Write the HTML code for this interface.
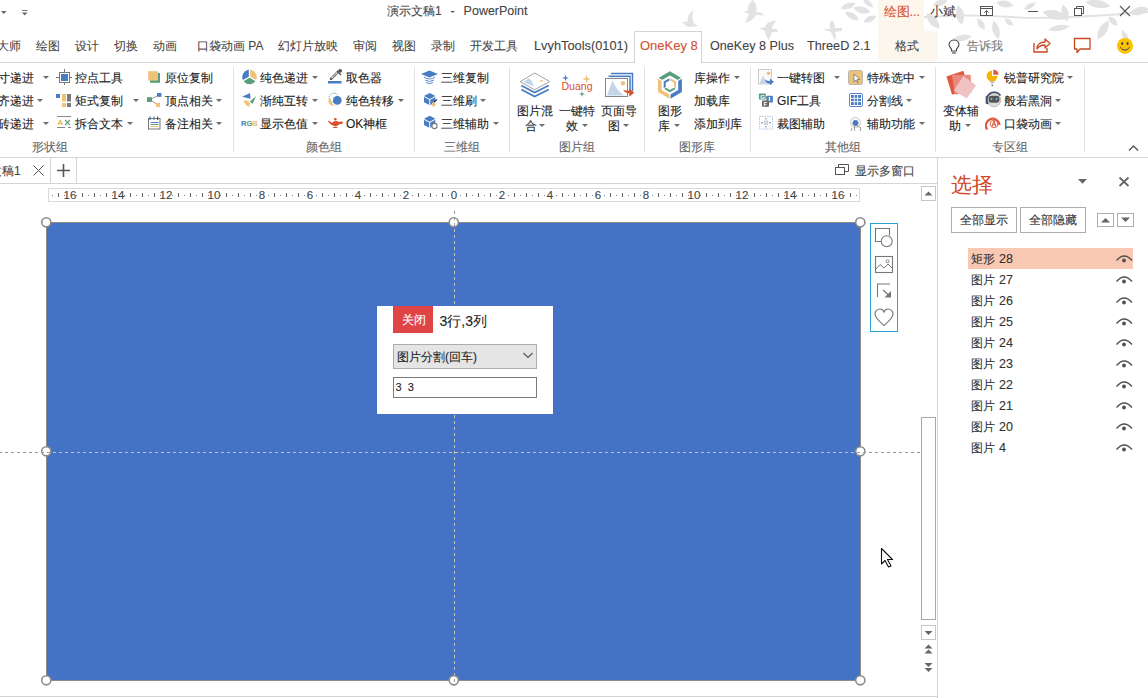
<!DOCTYPE html><html><head><meta charset="utf-8"><style>
html,body{margin:0;padding:0;width:1148px;height:698px;overflow:hidden;background:#fff;font-family:"Liberation Sans",sans-serif;}
.t{position:absolute;white-space:nowrap;-webkit-text-stroke:0.1px currentColor;}
.arr{position:absolute;width:0;height:0;border-left:3px solid transparent;border-right:3px solid transparent;border-top:3px solid #777;}
</style></head><body>
<svg style="position:absolute;left:0px;top:0px;" width="1148" height="62" viewBox="0 0 1148 62"><path fill="#e2e2e2" d="M693.5,10 C689,13 687,17 688,21 L682,22.5 L688,27 L698,26 L694,23.5 C692,20 692,15 693.5,10 Z"/><path fill="#e2e2e2" d="M752.6,0 C749,3 747,8 748,11 L743,11 L749,14 C748,17 746,20 745,22.5 C750,22 754,19 756,15 L764,15.5 L762,13 L756,12 C758,8 756,3 752.6,0 Z"/><path fill="#e2e2e2" d="M776,20.5 C770,21 766,23 765,27 L759,28.5 L765,31 C765,35 767,38 769,40 C770,37 771,34 772,32 L777.5,32 L777.5,29 L772,29 C772,26 774,23 776,20.5 Z"/><path fill="#e2e2e2" d="M832,20 C829,23 829,26 831,29 L823,29 L831,32 C832,35 833,38 836,40 C836,37 836,35 835,32 L842,31 L842,28 L835,28 C835,25 834,22 832,20 Z"/><path transform="translate(848,6) rotate(-20)" fill="#e2e2e2" d="M-8.0,0 Q0,-6 8.0,0 Q0,6 -8.0,0 Z"/><path transform="translate(862,10) rotate(15)" fill="#e2e2e2" d="M-9.0,0 Q0,-7 9.0,0 Q0,7 -9.0,0 Z"/><path transform="translate(852,16) rotate(30)" fill="#e2e2e2" d="M-8.0,0 Q0,-6 8.0,0 Q0,6 -8.0,0 Z"/><path transform="translate(870,19) rotate(-25)" fill="#e2e2e2" d="M-7.0,0 Q0,-6 7.0,0 Q0,6 -7.0,0 Z"/><path transform="translate(868,3) rotate(40)" fill="#e2e2e2" d="M-7.0,0 Q0,-5 7.0,0 Q0,5 -7.0,0 Z"/><path d="M924,17 Q970,14 1011,17 T1148,12" stroke="#e2e2e2" stroke-width="1.8" fill="none"/><path transform="translate(933,21) rotate(50)" fill="#e2e2e2" d="M-10.0,0 Q0,-8 10.0,0 Q0,8 -10.0,0 Z"/><path transform="translate(960,15) rotate(80)" fill="#e2e2e2" d="M-10.0,0 Q0,-8 10.0,0 Q0,8 -10.0,0 Z"/><path transform="translate(1005,4) rotate(10)" fill="#e2e2e2" d="M-9.0,0 Q0,-7 9.0,0 Q0,7 -9.0,0 Z"/><path transform="translate(981,24) rotate(60)" fill="#e2e2e2" d="M-7.0,0 Q0,-6 7.0,0 Q0,6 -7.0,0 Z"/><path transform="translate(996,30) rotate(75)" fill="#e2e2e2" d="M-10.0,0 Q0,-7 10.0,0 Q0,7 -10.0,0 Z"/><path transform="translate(1009,22) rotate(40)" fill="#e2e2e2" d="M-5.5,0 Q0,-5 5.5,0 Q0,5 -5.5,0 Z"/><path transform="translate(1055,15) rotate(15)" fill="#e2e2e2" d="M-13.0,0 Q0,-9 13.0,0 Q0,9 -13.0,0 Z"/><path transform="translate(1065,13) rotate(75)" fill="#e2e2e2" d="M-9.0,0 Q0,-7 9.0,0 Q0,7 -9.0,0 Z"/><path transform="translate(1059,28) rotate(-10)" fill="#e2e2e2" d="M-11.0,0 Q0,-6 11.0,0 Q0,6 -11.0,0 Z"/><path transform="translate(1098,4) rotate(10)" fill="#e2e2e2" d="M-13.0,0 Q0,-8 13.0,0 Q0,8 -13.0,0 Z"/><path transform="translate(1103,30) rotate(-60)" fill="#e2e2e2" d="M-11.0,0 Q0,-8 11.0,0 Q0,8 -11.0,0 Z"/><path transform="translate(1113,21) rotate(45)" fill="#e2e2e2" d="M-6.5,0 Q0,-6 6.5,0 Q0,6 -6.5,0 Z"/><path transform="translate(1139,11) rotate(-15)" fill="#e2e2e2" d="M-10.0,0 Q0,-8 10.0,0 Q0,8 -10.0,0 Z"/><path transform="translate(962,38) rotate(-10)" fill="#e2e2e2" d="M-10.0,0 Q0,-6 10.0,0 Q0,6 -10.0,0 Z"/><path transform="translate(940,3) rotate(-20)" fill="#e2e2e2" d="M-8.0,0 Q0,-6 8.0,0 Q0,6 -8.0,0 Z"/><path transform="translate(1030,6) rotate(-30)" fill="#e2e2e2" d="M-7.0,0 Q0,-5 7.0,0 Q0,5 -7.0,0 Z"/><path transform="translate(1125,36) rotate(60)" fill="#e2e2e2" d="M-7.0,0 Q0,-5 7.0,0 Q0,5 -7.0,0 Z"/></svg>
<div style="position:absolute;left:878px;top:0px;width:46px;height:31px;background:#fdf6ec"></div>
<div style="position:absolute;left:878px;top:31px;width:60px;height:30px;background:#fdf6ec"></div>
<svg style="position:absolute;left:0px;top:0px;" width="40" height="20" viewBox="0 0 40 20"><path d="M1,11 H6.5 L3.75,14 Z" fill="#666"/><path d="M22,10.5 H27.5" stroke="#777" stroke-width="1"/><path d="M22,12.5 H27.5 L24.75,15.5 Z" fill="#666"/></svg>
<div class="t" style="left:387px;top:0.5px;font-size:12px;line-height:20px;color:#444;">演示文稿1</div>
<div class="t" style="left:450.5px;top:0.5px;font-size:12.5px;line-height:20px;color:#444;">-</div>
<div class="t" style="left:463.6px;top:0.5px;font-size:12.5px;line-height:20px;color:#444;">PowerPoint</div>
<div class="t" style="left:883.5px;top:1.5px;font-size:12.5px;line-height:20px;color:#d35230;">绘图...</div>
<div class="t" style="left:930px;top:1.5px;font-size:12.5px;line-height:20px;color:#444;">小斌</div>
<svg style="position:absolute;left:0px;top:0px;" width="1148" height="24" viewBox="0 0 1148 24"><rect x="980.5" y="6.5" width="12" height="9" fill="none" stroke="#555" stroke-width="1"/><path d="M980.5,8.5 H992.5" stroke="#555" stroke-width="1"/><path d="M986.5,15 V10.5 M984.3,12.7 L986.5,10.5 L988.7,12.7" fill="none" stroke="#555" stroke-width="1"/></svg>
<div style="position:absolute;left:1028px;top:11px;width:10px;height:1px;background:#555"></div>
<svg style="position:absolute;left:1073px;top:5px;" width="12" height="12" viewBox="0 0 12 12"><rect x="1.5" y="3.5" width="7" height="7" fill="none" stroke="#555"/><path d="M3.5,3.5 V1.5 H10.5 V8.5 H8.5" fill="none" stroke="#555"/></svg>
<svg style="position:absolute;left:1119px;top:5px;" width="12" height="12" viewBox="0 0 12 12"><path d="M1,1 L11,11 M11,1 L1,11" stroke="#555" stroke-width="1.1"/></svg>
<div class="t" style="left:-3px;top:35.5px;font-size:12px;line-height:20px;color:#444;-webkit-text-stroke:0.08px currentColor">大师</div>
<div class="t" style="left:36px;top:35.5px;font-size:12px;line-height:20px;color:#444;-webkit-text-stroke:0.08px currentColor">绘图</div>
<div class="t" style="left:75px;top:35.5px;font-size:12px;line-height:20px;color:#444;-webkit-text-stroke:0.08px currentColor">设计</div>
<div class="t" style="left:114px;top:35.5px;font-size:12px;line-height:20px;color:#444;-webkit-text-stroke:0.08px currentColor">切换</div>
<div class="t" style="left:153px;top:35.5px;font-size:12px;line-height:20px;color:#444;-webkit-text-stroke:0.08px currentColor">动画</div>
<div class="t" style="left:197px;top:35.5px;font-size:12px;line-height:20px;color:#444;-webkit-text-stroke:0.08px currentColor">口袋动画 PA</div>
<div class="t" style="left:278px;top:35.5px;font-size:12px;line-height:20px;color:#444;-webkit-text-stroke:0.08px currentColor">幻灯片放映</div>
<div class="t" style="left:353px;top:35.5px;font-size:12px;line-height:20px;color:#444;-webkit-text-stroke:0.08px currentColor">审阅</div>
<div class="t" style="left:392px;top:35.5px;font-size:12px;line-height:20px;color:#444;-webkit-text-stroke:0.08px currentColor">视图</div>
<div class="t" style="left:431px;top:35.5px;font-size:12px;line-height:20px;color:#444;-webkit-text-stroke:0.08px currentColor">录制</div>
<div class="t" style="left:470px;top:35.5px;font-size:12px;line-height:20px;color:#444;-webkit-text-stroke:0.08px currentColor">开发工具</div>
<div style="position:absolute;left:634px;top:31px;width:66px;height:31px;border:1px solid #d4d4d4;border-bottom:none;background:#fff"></div>
<div class="t" style="left:534px;top:36.0px;font-size:12.8px;line-height:20px;color:#444;">LvyhTools(0101)</div>
<div class="t" style="left:640px;top:36.0px;font-size:13px;line-height:20px;color:#d35230;">OneKey 8</div>
<div class="t" style="left:710px;top:36.0px;font-size:12.6px;line-height:20px;color:#444;">OneKey 8 Plus</div>
<div class="t" style="left:807px;top:36.0px;font-size:12.7px;line-height:20px;color:#444;">ThreeD 2.1</div>
<div class="t" style="left:895px;top:35.5px;font-size:12px;line-height:20px;color:#444;">格式</div>
<svg style="position:absolute;left:946px;top:38px;" width="16" height="17" viewBox="0 0 16 17"><path d="M8,2 C4.5,2 3,4.5 3,6.5 C3,8.5 4.5,9.5 5.5,11 V13 H10.5 V11 C11.5,9.5 13,8.5 13,6.5 C13,4.5 11.5,2 8,2 Z" fill="none" stroke="#444" stroke-width="1.1"/><path d="M6,15 H10" stroke="#444" stroke-width="1.1"/></svg>
<div class="t" style="left:967px;top:35.5px;font-size:12px;line-height:20px;color:#777;">告诉我</div>
<svg style="position:absolute;left:1032px;top:37px;" width="20" height="17" viewBox="0 0 20 17"><path d="M2,6 V15 H15 V11" fill="none" stroke="#c8481f" stroke-width="1.3"/><path d="M5,12 C5,7 9,5 13,5 V2 L18,6.5 L13,11 V8 C10,8 7,9 5,12 Z" fill="none" stroke="#c8481f" stroke-width="1.3" stroke-linejoin="round"/></svg>
<svg style="position:absolute;left:1073px;top:37px;" width="19" height="17" viewBox="0 0 19 17"><path d="M1.5,1.5 H17 V12 H7 L4,15.5 V12 H1.5 Z" fill="none" stroke="#c8481f" stroke-width="1.3" stroke-linejoin="round"/></svg>
<svg style="position:absolute;left:1116px;top:37px;" width="18" height="18" viewBox="0 0 18 18"><circle cx="9" cy="8.9" r="8" fill="#fcc400"/><ellipse cx="6.2" cy="6.5" rx="1" ry="1.5" fill="#3a3a5a"/><ellipse cx="11.6" cy="6.5" rx="1" ry="1.5" fill="#3a3a5a"/><path d="M4.3,10.2 Q9,16.2 13.6,10.2" fill="none" stroke="#3a3a5a" stroke-width="1"/></svg>
<div style="position:absolute;left:0px;top:62px;width:635px;height:1px;background:#d4d4d4"></div>
<div style="position:absolute;left:701px;top:62px;width:447px;height:1px;background:#d4d4d4"></div>
<div style="position:absolute;left:233px;top:67px;width:1px;height:85px;background:#e1e1e1"></div>
<div style="position:absolute;left:414px;top:67px;width:1px;height:85px;background:#e1e1e1"></div>
<div style="position:absolute;left:509px;top:67px;width:1px;height:85px;background:#e1e1e1"></div>
<div style="position:absolute;left:644px;top:67px;width:1px;height:85px;background:#e1e1e1"></div>
<div style="position:absolute;left:750px;top:67px;width:1px;height:85px;background:#e1e1e1"></div>
<div style="position:absolute;left:935px;top:67px;width:1px;height:85px;background:#e1e1e1"></div>
<div style="position:absolute;left:1084px;top:67px;width:1px;height:85px;background:#e1e1e1"></div>
<div class="t" style="left:32px;top:137.0px;font-size:12px;line-height:20px;color:#666;">形状组</div>
<div class="t" style="left:306px;top:137.0px;font-size:12px;line-height:20px;color:#666;">颜色组</div>
<div class="t" style="left:444px;top:137.0px;font-size:12px;line-height:20px;color:#666;">三维组</div>
<div class="t" style="left:559px;top:137.0px;font-size:12px;line-height:20px;color:#666;">图片组</div>
<div class="t" style="left:679px;top:137.0px;font-size:12px;line-height:20px;color:#666;">图形库</div>
<div class="t" style="left:825px;top:137.0px;font-size:12px;line-height:20px;color:#666;">其他组</div>
<div class="t" style="left:992px;top:137.0px;font-size:12px;line-height:20px;color:#666;">专区组</div>
<svg style="position:absolute;left:1128px;top:144px;" width="11" height="8" viewBox="0 0 11 8"><path d="M1,6.5 L5.5,2 L10,6.5" fill="none" stroke="#555" stroke-width="1.4"/></svg>
<div class="t" style="left:-2.5px;top:68.0px;font-size:12px;line-height:20px;color:#222;">寸递进</div>
<div class="arr" style="left:42.6px;top:76.0px;border-top-color:#6d6d6d"></div>
<div class="t" style="left:-2.5px;top:91.0px;font-size:12px;line-height:20px;color:#222;">齐递进</div>
<div class="arr" style="left:36.7px;top:99.0px;border-top-color:#6d6d6d"></div>
<div class="t" style="left:-2.5px;top:113.5px;font-size:12px;line-height:20px;color:#222;">砖递进</div>
<div class="arr" style="left:42.6px;top:121.5px;border-top-color:#6d6d6d"></div>
<svg style="position:absolute;left:55px;top:69px;" width="17" height="17" viewBox="0 0 17 17"><path d="M9.5,0 V16 M1,8.5 H17" stroke="#777" stroke-width="1"/><rect x="4.5" y="3.5" width="10" height="10" fill="#fff" stroke="#777" stroke-width="1"/><rect x="6" y="5" width="7" height="7" fill="#4a7cc4"/></svg>
<div class="t" style="left:75px;top:68.0px;font-size:12px;line-height:20px;color:#222;">控点工具</div>
<svg style="position:absolute;left:55px;top:92px;" width="17" height="17" viewBox="0 0 17 17"><rect x="1" y="2" width="4" height="4" fill="#4a7cc4"/><rect x="7" y="2" width="4" height="7.5" fill="#efc27a"/><rect x="12" y="2" width="4" height="7.5" fill="#7a7a7a"/><rect x="7" y="11" width="4" height="4" fill="#efc27a"/><rect x="12" y="11" width="4" height="4" fill="#7a7a7a"/></svg>
<div class="t" style="left:75px;top:91.0px;font-size:12px;line-height:20px;color:#222;">矩式复制</div>
<div class="arr" style="left:132.5px;top:99.0px;border-top-color:#6d6d6d"></div>
<svg style="position:absolute;left:55px;top:115px;" width="17" height="17" viewBox="0 0 17 17"><path d="M2,1.5 H16" stroke="#888" stroke-width="1"/><path d="M2,12.5 H10 M13,12.5 H16" stroke="#888" stroke-width="1"/><text x="2.5" y="10.2" font-size="8" font-family="Liberation Sans" fill="#f0b44c" font-weight="bold">A</text><path d="M10,5 L15,10 M15,5 L10,10" stroke="#5a9e80" stroke-width="1.1"/></svg>
<div class="t" style="left:75px;top:113.5px;font-size:12px;line-height:20px;color:#222;">拆合文本</div>
<div class="arr" style="left:126.69999999999999px;top:121.5px;border-top-color:#6d6d6d"></div>
<svg style="position:absolute;left:147px;top:70px;" width="15" height="15" viewBox="0 0 15 15"><rect x="3" y="3" width="10" height="9.8" fill="#5a9e80"/><rect x="1.2" y="1.2" width="9.8" height="9.4" fill="#efc27a"/></svg>
<div class="t" style="left:165px;top:68.0px;font-size:12px;line-height:20px;color:#222;">原位复制</div>
<svg style="position:absolute;left:146px;top:92px;" width="16" height="16" viewBox="0 0 16 16"><path d="M4,7.5 L13,3 M4,7.5 L12,13" stroke="#999" stroke-width="1"/><rect x="1" y="5.2" width="5" height="4.8" fill="#5a9e80"/><rect x="11" y="1" width="4.4" height="3.8" fill="#4a7cc4"/><rect x="10" y="11" width="4" height="4" fill="#efc27a"/></svg>
<div class="t" style="left:165px;top:91.0px;font-size:12px;line-height:20px;color:#222;">顶点相关</div>
<div class="arr" style="left:216px;top:99.0px;border-top-color:#6d6d6d"></div>
<svg style="position:absolute;left:147px;top:114px;" width="15" height="17" viewBox="0 0 15 17"><rect x="1.5" y="4.5" width="11.5" height="10.5" fill="#fff" stroke="#666" stroke-width="0.9"/><path d="M3,2.5 V6 M7,2.5 V6 M10.6,2.5 V6" stroke-width="1.4"/><path d="M3,2.5 V6" stroke="#4a7cc4" stroke-width="1.4"/><path d="M7,2.5 V6" stroke="#5a9e80" stroke-width="1.4"/><path d="M10.6,2.5 V6" stroke="#555" stroke-width="1.2"/><path d="M3.5,8.5 H11.5" stroke="#4a7cc4" stroke-width="1"/><path d="M3.5,10.5 H11.5" stroke="#5a9e80" stroke-width="1"/><path d="M3.5,12.5 H11.5" stroke="#efc27a" stroke-width="1"/></svg>
<div class="t" style="left:165px;top:113.5px;font-size:12px;line-height:20px;color:#222;">备注相关</div>
<div class="arr" style="left:216px;top:121.5px;border-top-color:#6d6d6d"></div>
<svg style="position:absolute;left:0px;top:0px;" width="360" height="140" viewBox="0 0 360 140"><path d="M249.5,77 L243.26,80.60 A7.2,7.2 0 0 1 249.50,69.80 Z" fill="#4a7cc4"/><path d="M249.5,77 L249.50,69.80 A7.2,7.2 0 0 1 255.74,80.60 Z" fill="#efc27a"/><path d="M249.5,77 L255.74,80.60 A7.2,7.2 0 0 1 243.26,80.60 Z" fill="#5a9e80"/><path d="M249.5,77 L249.50,69.80 M249.5,77 L255.74,80.60 M249.5,77 L243.26,80.60" stroke="#fff" stroke-width="1.3"/></svg>
<div class="t" style="left:260px;top:68.0px;font-size:12px;line-height:20px;color:#222;">纯色递进</div>
<div class="arr" style="left:311.6px;top:76.0px;border-top-color:#6d6d6d"></div>
<svg style="position:absolute;left:0px;top:0px;" width="360" height="140" viewBox="0 0 360 140"><path d="M242,96.8 L250,93 L250.5,98.8 Z" fill="#4a7cc4"/><path d="M256.2,96 L252.5,104 L249.8,101.5 Z" fill="#5a9e80"/><path d="M243.5,100.8 Q247.5,99.8 249.8,102.5 L249.5,107 Q245,105.5 243.5,100.8 Z" fill="#efc27a"/></svg>
<div class="t" style="left:260px;top:91.0px;font-size:12px;line-height:20px;color:#222;">渐纯互转</div>
<div class="arr" style="left:311.6px;top:99.0px;border-top-color:#6d6d6d"></div>
<div class="t" style="left:241px;top:113.5px;font-size:7.5px;line-height:20px;color:#222;"><b style="color:#4a7cc4">R</b><b style="color:#5a9e80">G</b><b style="color:#efc27a">B</b></div>
<div class="t" style="left:260px;top:113.5px;font-size:12px;line-height:20px;color:#222;">显示色值</div>
<div class="arr" style="left:311.6px;top:121.5px;border-top-color:#6d6d6d"></div>
<svg style="position:absolute;left:0px;top:0px;" width="360" height="140" viewBox="0 0 360 140"><rect x="328" y="81" width="13.5" height="2.5" fill="#4a7cc4"/><path d="M331,78.8 L338,71.8" stroke="#555" stroke-width="2.6" stroke-linecap="round"/><path d="M331.6,78.2 L337.4,72.4" stroke="#fff" stroke-width="1.1"/><path d="M333,76.8 L335.5,74.3" stroke="#6a9ad6" stroke-width="0.9"/><path d="M337,71 L341,75" stroke="#555" stroke-width="1.3"/><circle cx="340.2" cy="70.8" r="1.9" fill="#555"/></svg>
<div class="t" style="left:346px;top:68.0px;font-size:12px;line-height:20px;color:#222;">取色器</div>
<svg style="position:absolute;left:0px;top:0px;" width="360" height="140" viewBox="0 0 360 140"><circle cx="333.7" cy="97.7" r="4.6" fill="none" stroke="#5a9e80" stroke-width="0.8" stroke-dasharray="1.6 0.8"/><path d="M328.2,100 Q328.5,106.5 336,105.8 Q331,104.5 330.8,99 Z" fill="#efc27a"/><circle cx="337.3" cy="100.4" r="4.3" fill="#4a7cc4"/></svg>
<div class="t" style="left:346px;top:91.0px;font-size:12px;line-height:20px;color:#222;">纯色转移</div>
<div class="arr" style="left:398px;top:99.0px;border-top-color:#6d6d6d"></div>
<svg style="position:absolute;left:0px;top:0px;" width="360" height="140" viewBox="0 0 360 140"><path d="M327.5,120.5 C330,121 331,122 332,123 C333,121 337,120 339,122 L341,121.5 C343,121 343.5,123 342,124 L339.5,124 C338.5,125.5 337,126 335.5,126 V127 H337.5 V128 H333 V127 H335 V126 C333,126 331,125 330,123.5 C329,122.5 328,121.5 327.5,120.5 Z" fill="#d9502c"/><circle cx="335.3" cy="119.3" r="1.3" fill="#d9502c"/></svg>
<div class="t" style="left:346px;top:113.5px;font-size:12px;line-height:20px;color:#222;">OK神框</div>
<svg style="position:absolute;left:421px;top:70px;" width="17" height="16" viewBox="0 0 17 16"><path d="M0,4 L8.5,0.5 L17,4 L8.5,7.5 Z" fill="#4a7cc4"/><path d="M3,7 Q8.5,11 14,7 M4,10 Q8.5,13 13,10 M5,12.5 Q8.5,15 12,12.5" fill="none" stroke="#4a7cc4" stroke-width="0.9"/></svg>
<div class="t" style="left:441px;top:68.0px;font-size:12px;line-height:20px;color:#222;">三维复制</div>
<svg style="position:absolute;left:0px;top:0px;" width="460" height="140" viewBox="0 0 460 140"><path d="M424,96 L429.7,93 L435.4,96 L429.7,99 Z" fill="#4a7cc4"/><path d="M424,97 L429.2,99.8 V105 L424,102.2 Z" fill="#4a7cc4"/><path d="M430.2,99.8 L435.4,97 V102.2 L430.2,105 Z" fill="#4a7cc4"/><path d="M431,104.5 L433.5,101.5 L436,104.5 L433.5,107 Z" fill="#efc27a"/><path d="M434,102 L437,99.5" stroke="#333" stroke-width="1.2"/></svg>
<svg style="position:absolute;left:0px;top:0px;" width="460" height="140" viewBox="0 0 460 140"><path d="M424,118.8 L429.7,115.8 L435.4,118.8 L429.7,121.8 Z" fill="#4a7cc4"/><path d="M424,119.8 L429.2,122.6 V127.8 L424,125.0 Z" fill="#4a7cc4"/><path d="M430.2,122.6 L435.4,119.8 V125.0 L430.2,127.8 Z" fill="#4a7cc4"/><circle cx="434.5" cy="126" r="2.6" fill="#fff" stroke="#777" stroke-width="1.1"/></svg>
<div class="t" style="left:441px;top:91.0px;font-size:12px;line-height:20px;color:#222;">三维刷</div>
<div class="arr" style="left:480.4px;top:99.0px;border-top-color:#6d6d6d"></div>
<div class="t" style="left:441px;top:113.5px;font-size:12px;line-height:20px;color:#222;">三维辅助</div>
<div class="arr" style="left:492.5px;top:121.5px;border-top-color:#6d6d6d"></div>
<svg style="position:absolute;left:0px;top:0px;" width="700" height="140" viewBox="0 0 700 140"><path d="M520.2,81.6 L534.6,73 L549.8,81.6 L534.6,89.7 Z" fill="#fff" stroke="#8a8a8a" stroke-width="0.8"/><path d="M523.5,82 L528.5,78.3 L531.5,80.5 L534,86.5 Z" fill="#c4d5ea"/><rect x="540" y="80.2" width="3" height="1.3" fill="#efc27a"/><path d="M521.3,85.5 L534.6,92.5 L548.7,85.5 M521.3,89.5 L534.6,96.5 L548.7,89.5" fill="none" stroke="#4a7cc4" stroke-width="1.7"/></svg>
<div class="t" style="left:517px;top:101.0px;font-size:12px;line-height:20px;color:#222;">图片混</div>
<div class="t" style="left:524.5px;top:116.0px;font-size:12px;line-height:20px;color:#222;">合</div>
<div class="arr" style="left:539px;top:124.0px;border-top-color:#6d6d6d"></div>
<svg style="position:absolute;left:560px;top:73px;" width="34" height="24" viewBox="0 0 34 24"><text x="1.5" y="17" font-size="11.5" textLength="31" lengthAdjust="spacingAndGlyphs" font-family="Liberation Sans" fill="#d9502c">Duang</text><path d="M5.5,1.5 L6.3,4.2 L9,5 L6.3,5.8 L5.5,8.5 L4.7,5.8 L2,5 L4.7,4.2 Z" fill="#4a7cc4"/><path d="M26.5,1 L27.3,5 L31,6 L27.3,7 L26.5,11 L25.7,7 L22,6 L25.7,5 Z" fill="#efc27a"/><path d="M22,18 L22.7,20.3 L25,21 L22.7,21.7 L22,24 L21.3,21.7 L19,21 L21.3,20.3 Z" fill="#5a9e80"/></svg>
<div class="t" style="left:559px;top:101.0px;font-size:12px;line-height:20px;color:#222;">一键特</div>
<div class="t" style="left:565.5px;top:116.0px;font-size:12px;line-height:20px;color:#222;">效</div>
<div class="arr" style="left:581.5px;top:124.0px;border-top-color:#6d6d6d"></div>
<svg style="position:absolute;left:0px;top:0px;" width="700" height="140" viewBox="0 0 700 140"><path d="M611,73.5 H632.5 V91" fill="none" stroke="#4a7cc4" stroke-width="1.5"/><path d="M608.5,76.3 H630 V93" fill="none" stroke="#4a7cc4" stroke-width="1.5"/><rect x="610" y="77.5" width="19.5" height="2" fill="#dbe6f3"/><rect x="605.5" y="78.5" width="22" height="18" fill="#fff" stroke="#888" stroke-width="1"/><path d="M607,95.5 L612.5,80.5 C615,87 619,92 624,95.5 Z" fill="#c4d5ea"/><circle cx="623" cy="83.2" r="2.2" fill="#efc27a"/><path d="M623,89.5 C624.5,92.5 627,93.5 629.3,93.2 V96.8 L634.2,92.8 L629.3,88.6 V90.8 C627,91 625,90.5 623,89.5 Z" fill="#d9502c"/></svg>
<div class="t" style="left:601px;top:101.0px;font-size:12px;line-height:20px;color:#222;">页面导</div>
<div class="t" style="left:607.5px;top:116.0px;font-size:12px;line-height:20px;color:#222;">图</div>
<div class="arr" style="left:623px;top:124.0px;border-top-color:#6d6d6d"></div>
<svg style="position:absolute;left:0px;top:0px;" width="700" height="140" viewBox="0 0 700 140"><path d="M657.95,78.20 L669.90,71.30 L681.85,78.20 L678.21,80.30 L669.90,75.50 L661.59,80.30 Z" fill="#5a9e80"/><path d="M681.85,78.20 L681.85,92.00 L669.90,98.90 L669.90,94.70 L678.21,89.90 L678.21,80.30 Z" fill="#4a7cc4"/><path d="M669.90,98.90 L657.95,92.00 L657.95,78.20 L661.59,80.30 L661.59,89.90 L669.90,94.70 Z" fill="#efc27a"/><path d="M682.46,77.85 L677.69,80.60" stroke="#fff" stroke-width="1.2"/><path d="M669.90,99.60 L669.90,94.10" stroke="#fff" stroke-width="1.2"/><path d="M657.34,77.85 L662.11,80.60" stroke="#fff" stroke-width="1.2"/><path d="M664.70,88.10 L664.70,82.10 L669.90,79.10" fill="none" stroke="#4a7cc4" stroke-width="2" stroke-linejoin="miter"/><path d="M669.90,79.10 L675.10,82.10 L675.10,88.10" fill="none" stroke="#efc27a" stroke-width="2" stroke-linejoin="miter"/><path d="M675.10,88.10 L669.90,91.10 L664.70,88.10" fill="none" stroke="#5a9e80" stroke-width="2" stroke-linejoin="miter"/><path d="M669.90,77.60 L669.90,80.60" stroke="#fff" stroke-width="0.9"/><path d="M676.40,88.85 L673.80,87.35" stroke="#fff" stroke-width="0.9"/><path d="M663.40,88.85 L666.00,87.35" stroke="#fff" stroke-width="0.9"/></svg>
<div class="t" style="left:658px;top:101.0px;font-size:12px;line-height:20px;color:#222;">图形</div>
<div class="t" style="left:658px;top:116.0px;font-size:12px;line-height:20px;color:#222;">库</div>
<div class="arr" style="left:674px;top:124.0px;border-top-color:#6d6d6d"></div>
<div class="t" style="left:694px;top:68.0px;font-size:12px;line-height:20px;color:#222;">库操作</div>
<div class="arr" style="left:733.5px;top:76.0px;border-top-color:#6d6d6d"></div>
<div class="t" style="left:694px;top:91.0px;font-size:12px;line-height:20px;color:#222;">加载库</div>
<div class="t" style="left:694px;top:113.5px;font-size:12px;line-height:20px;color:#222;">添加到库</div>
<svg style="position:absolute;left:0px;top:0px;" width="800" height="140" viewBox="0 0 800 140"><rect x="758.5" y="69.5" width="13" height="14.5" fill="#fafafa" stroke="#c8c8c8" stroke-width="0.9"/><path d="M759.5,83.5 L763,75.5 L767,83.5 Z" fill="#c4d5ea"/><circle cx="768.6" cy="73.2" r="1.8" fill="#efc27a"/><path d="M765,79.5 Q766,84 770,83.4 V85.3 L773.8,81.8 L770,78.6 V80.7 Q767.5,81.5 765,79.5 Z" fill="#4a7cc4"/></svg>
<div class="t" style="left:777px;top:68.0px;font-size:12px;line-height:20px;color:#222;">一键转图</div>
<div class="arr" style="left:834px;top:76.0px;border-top-color:#6d6d6d"></div>
<svg style="position:absolute;left:758px;top:92px;" width="16" height="16" viewBox="0 0 16 16"><rect x="0.9" y="1.4" width="6.9" height="6.1" rx="0.8" fill="#5a9e80"/><text x="2.2" y="6.8" font-size="6" fill="#fff" font-family="Liberation Sans" font-weight="bold">G</text><rect x="8.3" y="3.8" width="6.6" height="6.6" rx="0.8" fill="#4a7cc4"/><rect x="10.8" y="5" width="1.4" height="4" fill="#fff"/><rect x="4" y="8.5" width="7" height="6.3" rx="1" fill="#666"/><text x="5.4" y="14" font-size="6" fill="#fff" font-family="Liberation Sans" font-weight="bold">F</text></svg>
<div class="t" style="left:777px;top:91.0px;font-size:12px;line-height:20px;color:#222;">GIF工具</div>
<svg style="position:absolute;left:0px;top:0px;" width="800" height="140" viewBox="0 0 800 140"><rect x="759.5" y="116.5" width="13" height="12.5" fill="none" stroke="#9ab7dc" stroke-width="0.8" stroke-dasharray="1.5 1"/><rect x="764.2" y="121" width="3.6" height="3.4" fill="#dbe6f3" stroke="#aaa" stroke-width="0.5"/><circle cx="766" cy="118.8" r="0.8" fill="#888"/><circle cx="766" cy="126.8" r="0.8" fill="#888"/><circle cx="762" cy="122.8" r="0.8" fill="#4a7cc4"/><circle cx="770" cy="122.8" r="0.8" fill="#4a7cc4"/></svg>
<div class="t" style="left:777px;top:113.5px;font-size:12px;line-height:20px;color:#222;">裁图辅助</div>
<svg style="position:absolute;left:848px;top:70px;" width="15" height="15" viewBox="0 0 15 15"><rect x="0.5" y="0.5" width="14" height="14" rx="2" fill="#efc27a" stroke="#aaa" stroke-width="0.8"/><path d="M6,4 L6,12 L8,10 L9.5,13 L10.5,12.5 L9,9.5 L12,9.5 Z" fill="#fff" stroke="#666" stroke-width="0.7"/></svg>
<div class="t" style="left:867px;top:68.0px;font-size:12px;line-height:20px;color:#222;">特殊选中</div>
<div class="arr" style="left:918.6px;top:76.0px;border-top-color:#6d6d6d"></div>
<svg style="position:absolute;left:849px;top:93px;" width="14" height="14" viewBox="0 0 14 14"><rect x="0.5" y="0.5" width="13" height="13" rx="1.5" fill="#fff" stroke="#4a7cc4" stroke-width="0.9"/><rect x="2" y="2" width="10" height="10" fill="#4a7cc4"/><path d="M2,5.3 H12 M2,8.6 H12 M5.3,2 V12 M8.6,2 V12" stroke="#fff" stroke-width="0.9"/></svg>
<div class="t" style="left:867px;top:91.0px;font-size:12px;line-height:20px;color:#222;">分割线</div>
<div class="arr" style="left:906px;top:99.0px;border-top-color:#6d6d6d"></div>
<svg style="position:absolute;left:0px;top:0px;" width="900" height="140" viewBox="0 0 900 140"><circle cx="855.5" cy="122.5" r="4.9" fill="none" stroke="#b5b5b5" stroke-width="0.8"/><circle cx="855.5" cy="123" r="3" fill="#4a7cc4"/><path d="M854.5,124.5 V131 M856.5,126 L860.5,127.5 V131 M852,128 L851,131" stroke="#888" stroke-width="0.8" fill="none"/></svg>
<div class="t" style="left:867px;top:113.5px;font-size:12px;line-height:20px;color:#222;">辅助功能</div>
<div class="arr" style="left:918.6px;top:121.5px;border-top-color:#6d6d6d"></div>
<svg style="position:absolute;left:940px;top:64px;" width="40" height="40" viewBox="0 0 40 40"><path d="M7.2,12.8 L23,7.5 L28,26 L12.5,30 Z" fill="#e05a3f" stroke="#e05a3f" stroke-width="1.2" stroke-linejoin="round"/><path d="M12.6,11.5 L30,11.3 L31,28 L15.5,30 Z" fill="#e88a7e" stroke="#e88a7e" stroke-width="1.2" stroke-linejoin="round"/><path d="M23.5,12.8 L35.2,21.6 L26.6,33.6 L14.5,26.6 Z" fill="#f0c2c2" stroke="#f0c2c2" stroke-width="1.2" stroke-linejoin="round"/></svg>
<div class="t" style="left:942.5px;top:101.0px;font-size:12px;line-height:20px;color:#222;">变体辅</div>
<div class="t" style="left:949px;top:116.0px;font-size:12px;line-height:20px;color:#222;">助</div>
<div class="arr" style="left:965px;top:124.0px;border-top-color:#6d6d6d"></div>
<svg style="position:absolute;left:0px;top:0px;" width="1010" height="140" viewBox="0 0 1010 140"><path d="M988.5,80 H996 L992.2,85 Z" fill="#c8c8c8"/><path d="M991.2,85 H993.2 L992.2,86.5 Z" fill="#555"/><path d="M992,76 V70.6 A5.4,5.4 0 1 0 997.4,76 Z" fill="#f5b400"/><path d="M993.3,74.8 V69.6 A5.3,5.3 0 0 1 998.6,74.8 Z" fill="#e05a3f"/></svg>
<div class="t" style="left:1004px;top:68.0px;font-size:12px;line-height:20px;color:#222;">锐普研究院</div>
<div class="arr" style="left:1067px;top:76.0px;border-top-color:#6d6d6d"></div>
<svg style="position:absolute;left:0px;top:0px;" width="1010" height="140" viewBox="0 0 1010 140"><circle cx="994" cy="100" r="6.8" fill="#dcdcdc" stroke="#c0c0c0" stroke-width="1"/><path d="M988,104 A6.8,6.8 0 0 1 1000.5,95.5" fill="none" stroke="#3c4a6a" stroke-width="1.6"/><path d="M986.2,96 V104" stroke="#3c4a6a" stroke-width="1"/><rect x="988.5" y="95.8" width="11" height="7" rx="3" fill="#555"/><circle cx="991.5" cy="99" r="0.9" fill="#7cc4f0"/><circle cx="996.5" cy="99" r="0.9" fill="#7cc4f0"/></svg>
<div class="t" style="left:1004px;top:91.0px;font-size:12px;line-height:20px;color:#222;">般若黑洞</div>
<div class="arr" style="left:1055px;top:99.0px;border-top-color:#6d6d6d"></div>
<svg style="position:absolute;left:985px;top:115px;" width="16" height="15" viewBox="0 0 16 15"><path d="M2.2,14.5 A6.8,6.8 0 1 1 14.5,10" fill="none" stroke="#e05a3f" stroke-width="2.2"/><circle cx="9" cy="9" r="3.8" fill="none" stroke="#e05a3f" stroke-width="0.9"/><path d="M7,11.5 L9,6 L11,11.5 M7.8,9.8 H10.2" fill="none" stroke="#e05a3f" stroke-width="1.1"/></svg>
<div class="t" style="left:1004px;top:113.5px;font-size:12px;line-height:20px;color:#222;">口袋动画</div>
<div class="arr" style="left:1055px;top:121.5px;border-top-color:#6d6d6d"></div>
<div style="position:absolute;left:0px;top:157px;width:1148px;height:1px;background:#d4d4d4"></div>
<div class="t" style="left:-10px;top:161.0px;font-size:12px;line-height:20px;color:#444;">文稿1</div>
<svg style="position:absolute;left:33px;top:165px;" width="11" height="11" viewBox="0 0 11 11"><path d="M0.5,0.5 L10.5,10.5 M10.5,0.5 L0.5,10.5" stroke="#555" stroke-width="1"/></svg>
<div style="position:absolute;left:50px;top:158px;width:25px;height:25px;border-left:1px solid #d4d4d4;border-right:1px solid #d4d4d4"></div>
<svg style="position:absolute;left:57px;top:164px;" width="13" height="13" viewBox="0 0 13 13"><path d="M6.5,0 V13 M0,6.5 H13" stroke="#555" stroke-width="1.6"/></svg>
<div style="position:absolute;left:0px;top:183px;width:937px;height:1px;background:#d4d4d4"></div>
<svg style="position:absolute;left:835px;top:163px;" width="15" height="13" viewBox="0 0 15 13"><rect x="0.5" y="4.5" width="9" height="7" fill="none" stroke="#555"/><path d="M3.5,4.5 V1.5 H13.5 V8.5 H9.5" fill="none" stroke="#555"/></svg>
<div class="t" style="left:855px;top:160.5px;font-size:12px;line-height:20px;color:#444;">显示多窗口</div>
<div style="position:absolute;left:48px;top:188px;width:812px;height:14px;border:1px solid #dadada;box-sizing:border-box;background:#fff"></div>
<svg style="position:absolute;left:0px;top:0px;" width="1148" height="210" viewBox="0 0 1148 210"><rect shape-rendering="crispEdges" x="52" y="195" width="1" height="1" fill="#888"/><rect shape-rendering="crispEdges" x="58" y="193" width="1" height="4" fill="#666"/><rect shape-rendering="crispEdges" x="64" y="195" width="1" height="1" fill="#888"/><rect shape-rendering="crispEdges" x="76" y="195" width="1" height="1" fill="#888"/><rect shape-rendering="crispEdges" x="82" y="193" width="1" height="4" fill="#666"/><rect shape-rendering="crispEdges" x="88" y="195" width="1" height="1" fill="#888"/><rect shape-rendering="crispEdges" x="94" y="193" width="1" height="4" fill="#666"/><rect shape-rendering="crispEdges" x="100" y="195" width="1" height="1" fill="#888"/><rect shape-rendering="crispEdges" x="106" y="193" width="1" height="4" fill="#666"/><rect shape-rendering="crispEdges" x="112" y="195" width="1" height="1" fill="#888"/><rect shape-rendering="crispEdges" x="124" y="195" width="1" height="1" fill="#888"/><rect shape-rendering="crispEdges" x="130" y="193" width="1" height="4" fill="#666"/><rect shape-rendering="crispEdges" x="136" y="195" width="1" height="1" fill="#888"/><rect shape-rendering="crispEdges" x="142" y="193" width="1" height="4" fill="#666"/><rect shape-rendering="crispEdges" x="148" y="195" width="1" height="1" fill="#888"/><rect shape-rendering="crispEdges" x="154" y="193" width="1" height="4" fill="#666"/><rect shape-rendering="crispEdges" x="160" y="195" width="1" height="1" fill="#888"/><rect shape-rendering="crispEdges" x="172" y="195" width="1" height="1" fill="#888"/><rect shape-rendering="crispEdges" x="178" y="193" width="1" height="4" fill="#666"/><rect shape-rendering="crispEdges" x="184" y="195" width="1" height="1" fill="#888"/><rect shape-rendering="crispEdges" x="190" y="193" width="1" height="4" fill="#666"/><rect shape-rendering="crispEdges" x="196" y="195" width="1" height="1" fill="#888"/><rect shape-rendering="crispEdges" x="202" y="193" width="1" height="4" fill="#666"/><rect shape-rendering="crispEdges" x="208" y="195" width="1" height="1" fill="#888"/><rect shape-rendering="crispEdges" x="220" y="195" width="1" height="1" fill="#888"/><rect shape-rendering="crispEdges" x="226" y="193" width="1" height="4" fill="#666"/><rect shape-rendering="crispEdges" x="232" y="195" width="1" height="1" fill="#888"/><rect shape-rendering="crispEdges" x="238" y="193" width="1" height="4" fill="#666"/><rect shape-rendering="crispEdges" x="244" y="195" width="1" height="1" fill="#888"/><rect shape-rendering="crispEdges" x="250" y="193" width="1" height="4" fill="#666"/><rect shape-rendering="crispEdges" x="256" y="195" width="1" height="1" fill="#888"/><rect shape-rendering="crispEdges" x="268" y="195" width="1" height="1" fill="#888"/><rect shape-rendering="crispEdges" x="274" y="193" width="1" height="4" fill="#666"/><rect shape-rendering="crispEdges" x="280" y="195" width="1" height="1" fill="#888"/><rect shape-rendering="crispEdges" x="286" y="193" width="1" height="4" fill="#666"/><rect shape-rendering="crispEdges" x="292" y="195" width="1" height="1" fill="#888"/><rect shape-rendering="crispEdges" x="298" y="193" width="1" height="4" fill="#666"/><rect shape-rendering="crispEdges" x="304" y="195" width="1" height="1" fill="#888"/><rect shape-rendering="crispEdges" x="316" y="195" width="1" height="1" fill="#888"/><rect shape-rendering="crispEdges" x="322" y="193" width="1" height="4" fill="#666"/><rect shape-rendering="crispEdges" x="328" y="195" width="1" height="1" fill="#888"/><rect shape-rendering="crispEdges" x="334" y="193" width="1" height="4" fill="#666"/><rect shape-rendering="crispEdges" x="340" y="195" width="1" height="1" fill="#888"/><rect shape-rendering="crispEdges" x="346" y="193" width="1" height="4" fill="#666"/><rect shape-rendering="crispEdges" x="352" y="195" width="1" height="1" fill="#888"/><rect shape-rendering="crispEdges" x="364" y="195" width="1" height="1" fill="#888"/><rect shape-rendering="crispEdges" x="370" y="193" width="1" height="4" fill="#666"/><rect shape-rendering="crispEdges" x="376" y="195" width="1" height="1" fill="#888"/><rect shape-rendering="crispEdges" x="382" y="193" width="1" height="4" fill="#666"/><rect shape-rendering="crispEdges" x="388" y="195" width="1" height="1" fill="#888"/><rect shape-rendering="crispEdges" x="394" y="193" width="1" height="4" fill="#666"/><rect shape-rendering="crispEdges" x="400" y="195" width="1" height="1" fill="#888"/><rect shape-rendering="crispEdges" x="412" y="195" width="1" height="1" fill="#888"/><rect shape-rendering="crispEdges" x="418" y="193" width="1" height="4" fill="#666"/><rect shape-rendering="crispEdges" x="424" y="195" width="1" height="1" fill="#888"/><rect shape-rendering="crispEdges" x="430" y="193" width="1" height="4" fill="#666"/><rect shape-rendering="crispEdges" x="436" y="195" width="1" height="1" fill="#888"/><rect shape-rendering="crispEdges" x="442" y="193" width="1" height="4" fill="#666"/><rect shape-rendering="crispEdges" x="448" y="195" width="1" height="1" fill="#888"/><rect shape-rendering="crispEdges" x="460" y="195" width="1" height="1" fill="#888"/><rect shape-rendering="crispEdges" x="466" y="193" width="1" height="4" fill="#666"/><rect shape-rendering="crispEdges" x="472" y="195" width="1" height="1" fill="#888"/><rect shape-rendering="crispEdges" x="478" y="193" width="1" height="4" fill="#666"/><rect shape-rendering="crispEdges" x="484" y="195" width="1" height="1" fill="#888"/><rect shape-rendering="crispEdges" x="490" y="193" width="1" height="4" fill="#666"/><rect shape-rendering="crispEdges" x="496" y="195" width="1" height="1" fill="#888"/><rect shape-rendering="crispEdges" x="508" y="195" width="1" height="1" fill="#888"/><rect shape-rendering="crispEdges" x="514" y="193" width="1" height="4" fill="#666"/><rect shape-rendering="crispEdges" x="520" y="195" width="1" height="1" fill="#888"/><rect shape-rendering="crispEdges" x="526" y="193" width="1" height="4" fill="#666"/><rect shape-rendering="crispEdges" x="532" y="195" width="1" height="1" fill="#888"/><rect shape-rendering="crispEdges" x="538" y="193" width="1" height="4" fill="#666"/><rect shape-rendering="crispEdges" x="544" y="195" width="1" height="1" fill="#888"/><rect shape-rendering="crispEdges" x="556" y="195" width="1" height="1" fill="#888"/><rect shape-rendering="crispEdges" x="562" y="193" width="1" height="4" fill="#666"/><rect shape-rendering="crispEdges" x="568" y="195" width="1" height="1" fill="#888"/><rect shape-rendering="crispEdges" x="574" y="193" width="1" height="4" fill="#666"/><rect shape-rendering="crispEdges" x="580" y="195" width="1" height="1" fill="#888"/><rect shape-rendering="crispEdges" x="586" y="193" width="1" height="4" fill="#666"/><rect shape-rendering="crispEdges" x="592" y="195" width="1" height="1" fill="#888"/><rect shape-rendering="crispEdges" x="604" y="195" width="1" height="1" fill="#888"/><rect shape-rendering="crispEdges" x="610" y="193" width="1" height="4" fill="#666"/><rect shape-rendering="crispEdges" x="616" y="195" width="1" height="1" fill="#888"/><rect shape-rendering="crispEdges" x="622" y="193" width="1" height="4" fill="#666"/><rect shape-rendering="crispEdges" x="628" y="195" width="1" height="1" fill="#888"/><rect shape-rendering="crispEdges" x="634" y="193" width="1" height="4" fill="#666"/><rect shape-rendering="crispEdges" x="640" y="195" width="1" height="1" fill="#888"/><rect shape-rendering="crispEdges" x="652" y="195" width="1" height="1" fill="#888"/><rect shape-rendering="crispEdges" x="658" y="193" width="1" height="4" fill="#666"/><rect shape-rendering="crispEdges" x="664" y="195" width="1" height="1" fill="#888"/><rect shape-rendering="crispEdges" x="670" y="193" width="1" height="4" fill="#666"/><rect shape-rendering="crispEdges" x="676" y="195" width="1" height="1" fill="#888"/><rect shape-rendering="crispEdges" x="682" y="193" width="1" height="4" fill="#666"/><rect shape-rendering="crispEdges" x="688" y="195" width="1" height="1" fill="#888"/><rect shape-rendering="crispEdges" x="700" y="195" width="1" height="1" fill="#888"/><rect shape-rendering="crispEdges" x="706" y="193" width="1" height="4" fill="#666"/><rect shape-rendering="crispEdges" x="712" y="195" width="1" height="1" fill="#888"/><rect shape-rendering="crispEdges" x="718" y="193" width="1" height="4" fill="#666"/><rect shape-rendering="crispEdges" x="724" y="195" width="1" height="1" fill="#888"/><rect shape-rendering="crispEdges" x="730" y="193" width="1" height="4" fill="#666"/><rect shape-rendering="crispEdges" x="736" y="195" width="1" height="1" fill="#888"/><rect shape-rendering="crispEdges" x="748" y="195" width="1" height="1" fill="#888"/><rect shape-rendering="crispEdges" x="754" y="193" width="1" height="4" fill="#666"/><rect shape-rendering="crispEdges" x="760" y="195" width="1" height="1" fill="#888"/><rect shape-rendering="crispEdges" x="766" y="193" width="1" height="4" fill="#666"/><rect shape-rendering="crispEdges" x="772" y="195" width="1" height="1" fill="#888"/><rect shape-rendering="crispEdges" x="778" y="193" width="1" height="4" fill="#666"/><rect shape-rendering="crispEdges" x="784" y="195" width="1" height="1" fill="#888"/><rect shape-rendering="crispEdges" x="796" y="195" width="1" height="1" fill="#888"/><rect shape-rendering="crispEdges" x="802" y="193" width="1" height="4" fill="#666"/><rect shape-rendering="crispEdges" x="808" y="195" width="1" height="1" fill="#888"/><rect shape-rendering="crispEdges" x="814" y="193" width="1" height="4" fill="#666"/><rect shape-rendering="crispEdges" x="820" y="195" width="1" height="1" fill="#888"/><rect shape-rendering="crispEdges" x="826" y="193" width="1" height="4" fill="#666"/><rect shape-rendering="crispEdges" x="832" y="195" width="1" height="1" fill="#888"/><rect shape-rendering="crispEdges" x="844" y="195" width="1" height="1" fill="#888"/><rect shape-rendering="crispEdges" x="850" y="193" width="1" height="4" fill="#666"/><rect shape-rendering="crispEdges" x="856" y="195" width="1" height="1" fill="#888"/></svg>
<div class="t" style="left:50px;width:40px;text-align:center;top:185.5px;font-size:11.5px;line-height:18px;color:#444">16</div>
<div class="t" style="left:98px;width:40px;text-align:center;top:185.5px;font-size:11.5px;line-height:18px;color:#444">14</div>
<div class="t" style="left:146px;width:40px;text-align:center;top:185.5px;font-size:11.5px;line-height:18px;color:#444">12</div>
<div class="t" style="left:194px;width:40px;text-align:center;top:185.5px;font-size:11.5px;line-height:18px;color:#444">10</div>
<div class="t" style="left:242px;width:40px;text-align:center;top:185.5px;font-size:11.5px;line-height:18px;color:#444">8</div>
<div class="t" style="left:290px;width:40px;text-align:center;top:185.5px;font-size:11.5px;line-height:18px;color:#444">6</div>
<div class="t" style="left:338px;width:40px;text-align:center;top:185.5px;font-size:11.5px;line-height:18px;color:#444">4</div>
<div class="t" style="left:386px;width:40px;text-align:center;top:185.5px;font-size:11.5px;line-height:18px;color:#444">2</div>
<div class="t" style="left:434px;width:40px;text-align:center;top:185.5px;font-size:11.5px;line-height:18px;color:#444">0</div>
<div class="t" style="left:482px;width:40px;text-align:center;top:185.5px;font-size:11.5px;line-height:18px;color:#444">2</div>
<div class="t" style="left:530px;width:40px;text-align:center;top:185.5px;font-size:11.5px;line-height:18px;color:#444">4</div>
<div class="t" style="left:578px;width:40px;text-align:center;top:185.5px;font-size:11.5px;line-height:18px;color:#444">6</div>
<div class="t" style="left:626px;width:40px;text-align:center;top:185.5px;font-size:11.5px;line-height:18px;color:#444">8</div>
<div class="t" style="left:674px;width:40px;text-align:center;top:185.5px;font-size:11.5px;line-height:18px;color:#444">10</div>
<div class="t" style="left:722px;width:40px;text-align:center;top:185.5px;font-size:11.5px;line-height:18px;color:#444">12</div>
<div class="t" style="left:770px;width:40px;text-align:center;top:185.5px;font-size:11.5px;line-height:18px;color:#444">14</div>
<div class="t" style="left:818px;width:40px;text-align:center;top:185.5px;font-size:11.5px;line-height:18px;color:#444">16</div>
<div style="position:absolute;left:46px;top:222px;width:815px;height:459px;background:#4472c4;border:1px solid #8f8b84;box-sizing:border-box"></div>
<svg style="position:absolute;left:0px;top:0px;" width="1148" height="698" viewBox="0 0 1148 698"><circle cx="46.3" cy="222.3" r="4.6" fill="#fff" stroke="#8c8c8c" stroke-width="1.6"/><circle cx="453.8" cy="222.3" r="4.6" fill="#fff" stroke="#8c8c8c" stroke-width="1.6"/><circle cx="860.3" cy="222.3" r="4.6" fill="#fff" stroke="#8c8c8c" stroke-width="1.6"/><circle cx="46.3" cy="451.3" r="4.6" fill="#fff" stroke="#8c8c8c" stroke-width="1.6"/><circle cx="860.3" cy="451.3" r="4.6" fill="#fff" stroke="#8c8c8c" stroke-width="1.6"/><circle cx="46.3" cy="680.3" r="4.6" fill="#fff" stroke="#8c8c8c" stroke-width="1.6"/><circle cx="453.8" cy="680.3" r="4.6" fill="#fff" stroke="#8c8c8c" stroke-width="1.6"/><circle cx="860.3" cy="680.3" r="4.6" fill="#fff" stroke="#8c8c8c" stroke-width="1.6"/></svg>
<svg style="position:absolute;left:0;top:0" width="1148" height="698" shape-rendering="crispEdges"><path d="M0,452.5 H52" stroke="#9a9a9a" stroke-width="1" stroke-dasharray="3 3" stroke-dashoffset="1"/><path d="M52,452.5 H855" stroke="#c9c3b8" stroke-width="1" stroke-dasharray="3 3" stroke-dashoffset="5"/><path d="M855,452.5 H921" stroke="#9a9a9a" stroke-width="1" stroke-dasharray="3 3" stroke-dashoffset="4"/><path d="M454.5,211 V228" stroke="#9a9a9a" stroke-width="1" stroke-dasharray="3 3" stroke-dashoffset="0"/><path d="M454.5,228 V675" stroke="#c9c3b8" stroke-width="1" stroke-dasharray="3 3" stroke-dashoffset="5"/><path d="M454.5,675 V686" stroke="#9a9a9a" stroke-width="1" stroke-dasharray="3 3" stroke-dashoffset="2"/></svg>
<div style="position:absolute;left:377px;top:306px;width:176px;height:108px;background:#fff"></div>
<div style="position:absolute;left:393px;top:306px;width:40px;height:27px;background:#e04545"></div>
<div class="t" style="left:402px;top:310.0px;font-size:12px;line-height:20px;color:#fff;">关闭</div>
<div class="t" style="left:439.5px;top:311.0px;font-size:14px;line-height:20px;color:#222;">3行,3列</div>
<div style="position:absolute;left:393px;top:344px;width:144px;height:25px;background:#e5e5e5;border:1px solid #adadad;box-sizing:border-box"></div>
<div class="t" style="left:397px;top:347.0px;font-size:12px;line-height:20px;color:#222;">图片分割(回车)</div>
<svg style="position:absolute;left:523px;top:352px;" width="10" height="7" viewBox="0 0 10 7"><path d="M0.5,1 L5,5.5 L9.5,1" fill="none" stroke="#555" stroke-width="1.1"/></svg>
<div style="position:absolute;left:393px;top:377px;width:144px;height:21px;background:#fff;border:1px solid #7a7a7a;box-sizing:border-box"></div>
<div class="t" style="left:395.5px;top:377.0px;font-size:11px;line-height:20px;color:#222;">3&nbsp;&nbsp;3</div>
<div style="position:absolute;left:870px;top:223px;width:28px;height:109px;border:1px solid #2aa0d8;box-sizing:border-box;background:#fff"></div>
<svg style="position:absolute;left:870px;top:223px;" width="28" height="109" viewBox="0 0 28 109"><path d="M11,18.5 H5.5 V5.5 H19.5 V12.5" fill="none" stroke="#777" stroke-width="1.1"/><circle cx="16.7" cy="18.2" r="5.5" fill="#fff" stroke="#777" stroke-width="1.1"/><rect x="5.5" y="33.5" width="17" height="16" fill="none" stroke="#777" stroke-width="1.1"/><path d="M5.5,46.5 L10,41.5 L14,45 L18,41 L22.5,45.5" fill="none" stroke="#777" stroke-width="1"/><circle cx="17.6" cy="38.3" r="1.5" fill="none" stroke="#777" stroke-width="0.9"/><path d="M7.5,74 V61 H20" fill="none" stroke="#777" stroke-width="1.1"/><path d="M13,67 L18.5,72" stroke="#777" stroke-width="1.2"/><path d="M21,68 V74.5 H14.5 Z" fill="#777"/><path d="M14,102.5 C9,98 5,95 5,91 C5,88 7.5,86 10,86 C12,86 13.5,87.5 14,89 C14.5,87.5 16,86 18,86 C20.5,86 23,88 23,91 C23,95 19,98 14,102.5 Z" fill="none" stroke="#777" stroke-width="1.1"/></svg>
<svg style="position:absolute;left:880px;top:547px;" width="16" height="22" viewBox="0 0 16 22"><path d="M1.5,1.5 V17 L5,13.5 L8.5,20 L11,19 L7.5,12.5 H12.5 Z" fill="#fff" stroke="#111" stroke-width="1.1" stroke-linejoin="round"/></svg>
<div style="position:absolute;left:921px;top:186px;width:15px;height:15px;border:1px solid #c6c6c6;box-sizing:border-box"></div>
<svg style="position:absolute;left:921px;top:186px;" width="15" height="15" viewBox="0 0 15 15"><path d="M3.5,9.5 L7.5,5.5 L11.5,9.5 Z" fill="#666"/></svg>
<div style="position:absolute;left:921px;top:417px;width:15px;height:203px;border:1px solid #a8a8a8;box-sizing:border-box;background:#fff"></div>
<div style="position:absolute;left:921px;top:625px;width:15px;height:15px;border:1px solid #c6c6c6;box-sizing:border-box"></div>
<svg style="position:absolute;left:921px;top:625px;" width="15" height="15" viewBox="0 0 15 15"><path d="M3.5,6 L7.5,10 L11.5,6 Z" fill="#666"/></svg>
<svg style="position:absolute;left:921px;top:643px;" width="15" height="30" viewBox="0 0 15 30"><path d="M3.5,5.5 L7.5,1.5 L11.5,5.5 Z M3.5,10.5 L7.5,6.5 L11.5,10.5 Z" fill="#666"/><path d="M3.5,20 L7.5,24 L11.5,20 Z M3.5,25 L7.5,29 L11.5,25 Z" fill="#666"/></svg>
<div style="position:absolute;left:937px;top:158px;width:1px;height:540px;background:#d4d4d4"></div>
<div style="position:absolute;left:0px;top:696px;width:937px;height:1px;background:#d4d4d4"></div>
<div class="t" style="left:951px;top:169.5px;font-size:20.5px;line-height:30px;color:#d24726;-webkit-text-stroke:0">选择</div>
<svg style="position:absolute;left:1076px;top:177px;" width="12" height="8" viewBox="0 0 12 8"><path d="M2,2 H11 L6.5,6.8 Z" fill="#666"/></svg>
<svg style="position:absolute;left:1118px;top:176px;" width="12" height="11" viewBox="0 0 12 11"><path d="M1.5,1.5 L10.5,10 M10.5,1.5 L1.5,10" stroke="#666" stroke-width="1.8"/></svg>
<div style="position:absolute;left:951px;top:207px;width:66px;height:26px;border:1px solid #adadad;box-sizing:border-box"></div>
<div class="t" style="left:960px;top:209.5px;font-size:12px;line-height:20px;color:#333;">全部显示</div>
<div style="position:absolute;left:1020px;top:207px;width:66px;height:26px;border:1px solid #adadad;box-sizing:border-box"></div>
<div class="t" style="left:1029px;top:209.5px;font-size:12px;line-height:20px;color:#333;">全部隐藏</div>
<div style="position:absolute;left:1097px;top:213px;width:17px;height:14px;border:1px solid #adadad;box-sizing:border-box"></div>
<svg style="position:absolute;left:1097px;top:213px;" width="17" height="14" viewBox="0 0 17 14"><path d="M4,9.5 L8.5,5 L13,9.5 Z" fill="#666"/></svg>
<div style="position:absolute;left:1117px;top:213px;width:17px;height:14px;border:1px solid #adadad;box-sizing:border-box"></div>
<svg style="position:absolute;left:1117px;top:213px;" width="17" height="14" viewBox="0 0 17 14"><path d="M4,4.5 L8.5,9 L13,4.5 Z" fill="#666"/></svg>
<div style="position:absolute;left:968px;top:248px;width:165px;height:21px;background:#f9c8b2"></div>
<div class="t" style="left:970.5px;top:249.0px;font-size:12px;line-height:20px;color:#333;">矩形</div>
<div class="t" style="left:999px;top:249.0px;font-size:12.5px;line-height:20px;color:#333;">28</div>
<svg style="position:absolute;left:1110px;top:248.5px;" width="30" height="20" viewBox="0 0 30 20"><path d="M6.5,11.5 Q14.2,2.5 22,11.5" fill="none" stroke="#505050" stroke-width="1.3"/><circle cx="14" cy="11.5" r="1.9" fill="#505050"/></svg>
<div class="t" style="left:970.5px;top:270.0px;font-size:12px;line-height:20px;color:#333;">图片</div>
<div class="t" style="left:999px;top:270.0px;font-size:12.5px;line-height:20px;color:#333;">27</div>
<svg style="position:absolute;left:1110px;top:269.5px;" width="30" height="20" viewBox="0 0 30 20"><path d="M6.5,11.5 Q14.2,2.5 22,11.5" fill="none" stroke="#505050" stroke-width="1.3"/><circle cx="14" cy="11.5" r="1.9" fill="#505050"/></svg>
<div class="t" style="left:970.5px;top:291.0px;font-size:12px;line-height:20px;color:#333;">图片</div>
<div class="t" style="left:999px;top:291.0px;font-size:12.5px;line-height:20px;color:#333;">26</div>
<svg style="position:absolute;left:1110px;top:290.5px;" width="30" height="20" viewBox="0 0 30 20"><path d="M6.5,11.5 Q14.2,2.5 22,11.5" fill="none" stroke="#505050" stroke-width="1.3"/><circle cx="14" cy="11.5" r="1.9" fill="#505050"/></svg>
<div class="t" style="left:970.5px;top:312.0px;font-size:12px;line-height:20px;color:#333;">图片</div>
<div class="t" style="left:999px;top:312.0px;font-size:12.5px;line-height:20px;color:#333;">25</div>
<svg style="position:absolute;left:1110px;top:311.5px;" width="30" height="20" viewBox="0 0 30 20"><path d="M6.5,11.5 Q14.2,2.5 22,11.5" fill="none" stroke="#505050" stroke-width="1.3"/><circle cx="14" cy="11.5" r="1.9" fill="#505050"/></svg>
<div class="t" style="left:970.5px;top:333.0px;font-size:12px;line-height:20px;color:#333;">图片</div>
<div class="t" style="left:999px;top:333.0px;font-size:12.5px;line-height:20px;color:#333;">24</div>
<svg style="position:absolute;left:1110px;top:332.5px;" width="30" height="20" viewBox="0 0 30 20"><path d="M6.5,11.5 Q14.2,2.5 22,11.5" fill="none" stroke="#505050" stroke-width="1.3"/><circle cx="14" cy="11.5" r="1.9" fill="#505050"/></svg>
<div class="t" style="left:970.5px;top:354.0px;font-size:12px;line-height:20px;color:#333;">图片</div>
<div class="t" style="left:999px;top:354.0px;font-size:12.5px;line-height:20px;color:#333;">23</div>
<svg style="position:absolute;left:1110px;top:353.5px;" width="30" height="20" viewBox="0 0 30 20"><path d="M6.5,11.5 Q14.2,2.5 22,11.5" fill="none" stroke="#505050" stroke-width="1.3"/><circle cx="14" cy="11.5" r="1.9" fill="#505050"/></svg>
<div class="t" style="left:970.5px;top:375.0px;font-size:12px;line-height:20px;color:#333;">图片</div>
<div class="t" style="left:999px;top:375.0px;font-size:12.5px;line-height:20px;color:#333;">22</div>
<svg style="position:absolute;left:1110px;top:374.5px;" width="30" height="20" viewBox="0 0 30 20"><path d="M6.5,11.5 Q14.2,2.5 22,11.5" fill="none" stroke="#505050" stroke-width="1.3"/><circle cx="14" cy="11.5" r="1.9" fill="#505050"/></svg>
<div class="t" style="left:970.5px;top:396.0px;font-size:12px;line-height:20px;color:#333;">图片</div>
<div class="t" style="left:999px;top:396.0px;font-size:12.5px;line-height:20px;color:#333;">21</div>
<svg style="position:absolute;left:1110px;top:395.5px;" width="30" height="20" viewBox="0 0 30 20"><path d="M6.5,11.5 Q14.2,2.5 22,11.5" fill="none" stroke="#505050" stroke-width="1.3"/><circle cx="14" cy="11.5" r="1.9" fill="#505050"/></svg>
<div class="t" style="left:970.5px;top:417.0px;font-size:12px;line-height:20px;color:#333;">图片</div>
<div class="t" style="left:999px;top:417.0px;font-size:12.5px;line-height:20px;color:#333;">20</div>
<svg style="position:absolute;left:1110px;top:416.5px;" width="30" height="20" viewBox="0 0 30 20"><path d="M6.5,11.5 Q14.2,2.5 22,11.5" fill="none" stroke="#505050" stroke-width="1.3"/><circle cx="14" cy="11.5" r="1.9" fill="#505050"/></svg>
<div class="t" style="left:970.5px;top:438.0px;font-size:12px;line-height:20px;color:#333;">图片</div>
<div class="t" style="left:999px;top:438.0px;font-size:12.5px;line-height:20px;color:#333;">4</div>
<svg style="position:absolute;left:1110px;top:437.5px;" width="30" height="20" viewBox="0 0 30 20"><path d="M6.5,11.5 Q14.2,2.5 22,11.5" fill="none" stroke="#505050" stroke-width="1.3"/><circle cx="14" cy="11.5" r="1.9" fill="#505050"/></svg>
</body></html>
